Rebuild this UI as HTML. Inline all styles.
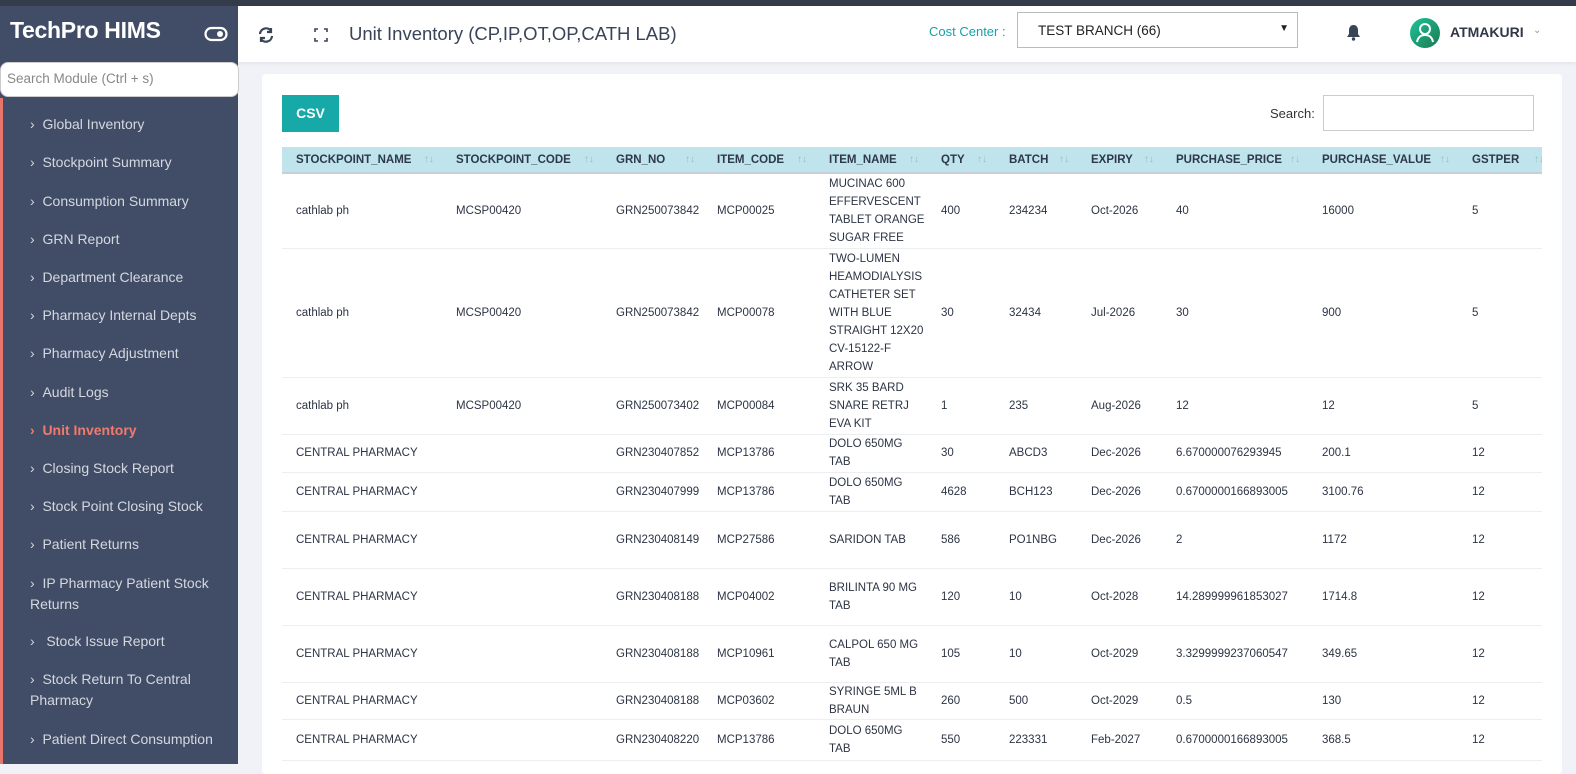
<!DOCTYPE html>
<html><head><meta charset="utf-8"><style>
*{box-sizing:border-box;margin:0;padding:0}
body{width:1576px;height:764px;overflow:hidden;background:#f0f2f7;font-family:"Liberation Sans",sans-serif;position:relative}
.top{position:absolute;left:0;top:0;width:1576px;height:6px;background:#343b4b}
.side{position:absolute;left:0;top:6px;width:238px;height:758px;background:#414d66}
.stripe{position:absolute;left:0;top:98px;width:3px;height:666px;background:#e8756b}
.logo{position:absolute;left:10px;top:17px;color:#fff;font-size:23px;font-weight:bold;letter-spacing:-0.3px}
.srch{position:absolute;left:0;top:62px;width:239px;height:35px;background:#fff;border:1px solid #ccc;border-radius:8px;color:#888;font-size:13.5px;padding:8px 6px}
.item{position:absolute;left:30px;color:#d4d8e0;font-size:14px;line-height:21px;width:200px}
.item.act{color:#f07a6c;font-weight:bold}
.hdr{position:absolute;left:238px;top:6px;width:1338px;height:56px;background:#fff;box-shadow:0 2px 4px rgba(0,0,0,.05)}
.title{position:absolute;left:349px;top:23px;font-size:18.5px;color:#3a4458}
.cc{position:absolute;left:929px;top:24px;font-size:13px;color:#17a2a7}
.sel{position:absolute;left:1017px;top:12px;width:281px;height:36px;border:1px solid #bbb;font-size:13.5px;color:#222;padding:10px 20px}
.card{position:absolute;left:262px;top:74px;width:1300px;height:700px;background:#fff;border-radius:4px}
.csv{position:absolute;left:282px;top:95px;width:57px;height:37px;background:#17a8a8;color:#fff;font-weight:bold;font-size:14px;text-align:center;line-height:37px}
.sl{position:absolute;left:1270px;top:106px;font-size:13px;color:#333}
.si{position:absolute;left:1323px;top:95px;width:211px;height:36px;border:1px solid #ccc}
table{border-collapse:collapse;table-layout:fixed;width:1270px}
th{background:#bfe4ec;height:26px;font-size:11.5px;color:#2f3848;text-align:left;padding-left:14px;border-bottom:2px solid #c7d0d6;white-space:nowrap;overflow:hidden;position:relative}
th span{color:#9bb;font-weight:normal;font-size:10px;position:absolute;right:8px;top:7px}
td{font-size:11.5px;color:#2c3444;padding:0 4px 0 14px;border-bottom:1px solid #eceef2;line-height:18px;vertical-align:middle;white-space:nowrap;overflow:hidden}
.wrap{position:absolute;left:282px;top:147px;width:1260px;height:620px;overflow:hidden}
</style></head><body>
<div class="top"></div>
<div class="side"></div><div class="stripe"></div>
<div class="logo">TechPro HIMS</div>
<svg style="position:absolute;left:204px;top:26px" width="24" height="16" viewBox="0 0 24 16"><rect x="1.5" y="2" width="21" height="12" rx="6" fill="none" stroke="#fff" stroke-width="2.2"/><circle cx="16" cy="8" r="3" fill="#fff"/></svg>
<div class="srch">Search Module (Ctrl + s)</div>
<div class="item" style="top:114px">›&nbsp;&nbsp;Global Inventory</div>
<div class="item" style="top:152px">›&nbsp;&nbsp;Stockpoint Summary</div>
<div class="item" style="top:191px">›&nbsp;&nbsp;Consumption Summary</div>
<div class="item" style="top:229px">›&nbsp;&nbsp;GRN Report</div>
<div class="item" style="top:267px">›&nbsp;&nbsp;Department Clearance</div>
<div class="item" style="top:305px">›&nbsp;&nbsp;Pharmacy Internal Depts</div>
<div class="item" style="top:343px">›&nbsp;&nbsp;Pharmacy Adjustment</div>
<div class="item" style="top:382px">›&nbsp;&nbsp;Audit Logs</div>
<div class="item act" style="top:420px">›&nbsp;&nbsp;Unit Inventory</div>
<div class="item" style="top:458px">›&nbsp;&nbsp;Closing Stock Report</div>
<div class="item" style="top:496px">›&nbsp;&nbsp;Stock Point Closing Stock</div>
<div class="item" style="top:534px">›&nbsp;&nbsp;Patient Returns</div>
<div class="item" style="top:573px">›&nbsp;&nbsp;IP Pharmacy Patient Stock Returns</div>
<div class="item" style="top:631px">›&nbsp;&nbsp;&nbsp;Stock Issue Report</div>
<div class="item" style="top:669px">›&nbsp;&nbsp;Stock Return To Central Pharmacy</div>
<div class="item" style="top:729px">›&nbsp;&nbsp;Patient Direct Consumption</div>
<div class="hdr"></div>
<svg style="position:absolute;left:257px;top:26px" width="18" height="18" viewBox="0 0 18 18" fill="none" stroke="#3a4458" stroke-width="2.2"><path d="M3 8a6 6 0 0 1 11-3"/><path d="M15 10a6 6 0 0 1-11 3"/><path d="M14 2v4h-4" /><path d="M4 16v-4h4"/></svg>
<svg style="position:absolute;left:314px;top:28px" width="14" height="14" viewBox="0 0 14 14" fill="none" stroke="#3a4458" stroke-width="1.6"><path d="M1 4V1h3M10 1h3v3M13 10v3h-3M4 13H1v-3"/></svg>
<div class="title">Unit Inventory (CP,IP,OT,OP,CATH LAB)</div>
<div class="cc">Cost Center :</div>
<div class="sel">TEST BRANCH (66)<span style="position:absolute;right:8px;top:10px;font-size:10px">▼</span></div>
<svg style="position:absolute;left:1346px;top:24px" width="15" height="17" viewBox="0 0 15 17"><path d="M7.5 1c-3 0-4.5 2.5-4.5 5v4L1 13h13l-2-3V6c0-2.5-1.5-5-4.5-5z" fill="#3a4458"/><circle cx="7.5" cy="15" r="1.7" fill="#3a4458"/></svg>
<svg style="position:absolute;left:1410px;top:18px" width="30" height="30" viewBox="0 0 30 30"><defs><linearGradient id="g" x1="0" y1="0" x2="1" y2="1"><stop offset="0" stop-color="#1fc39a"/><stop offset="1" stop-color="#1a7a4f"/></linearGradient></defs><circle cx="15" cy="15" r="15" fill="url(#g)"/><circle cx="15" cy="11" r="5" fill="none" stroke="#fff" stroke-width="2"/><path d="M7 24c1-5 4-7 8-7s7 2 8 7" fill="none" stroke="#fff" stroke-width="2"/></svg>
<div style="position:absolute;left:1450px;top:24px;font-size:14px;font-weight:bold;color:#2f3848">ATMAKURI</div>
<div style="position:absolute;left:1533px;top:25px;font-size:10px;color:#999">⌄</div>
<div class="card"></div>
<div class="csv">CSV</div>
<div class="sl">Search:</div><div class="si"></div>
<div class="wrap"><table>
<colgroup><col style="width:160px"><col style="width:160px"><col style="width:101px"><col style="width:112px"><col style="width:112px"><col style="width:68px"><col style="width:82px"><col style="width:85px"><col style="width:146px"><col style="width:150px"><col style="width:94px"></colgroup>
<tr><th>STOCKPOINT_NAME<span>↑↓</span></th><th>STOCKPOINT_CODE<span>↑↓</span></th><th>GRN_NO<span>↑↓</span></th><th>ITEM_CODE<span>↑↓</span></th><th>ITEM_NAME<span>↑↓</span></th><th>QTY<span>↑↓</span></th><th>BATCH<span>↑↓</span></th><th>EXPIRY<span>↑↓</span></th><th>PURCHASE_PRICE<span>↑↓</span></th><th>PURCHASE_VALUE<span>↑↓</span></th><th>GSTPER<span>↑↓</span></th></tr>
<tr style="height:75px"><td>cathlab ph</td><td>MCSP00420</td><td>GRN250073842</td><td>MCP00025</td><td>MUCINAC 600<br>EFFERVESCENT<br>TABLET ORANGE<br>SUGAR FREE</td><td>400</td><td>234234</td><td>Oct-2026</td><td>40</td><td>16000</td><td>5</td></tr>
<tr style="height:129px"><td>cathlab ph</td><td>MCSP00420</td><td>GRN250073842</td><td>MCP00078</td><td>TWO-LUMEN<br>HEAMODIALYSIS<br>CATHETER SET<br>WITH BLUE<br>STRAIGHT 12X20<br>CV-15122-F<br>ARROW</td><td>30</td><td>32434</td><td>Jul-2026</td><td>30</td><td>900</td><td>5</td></tr>
<tr style="height:57px"><td>cathlab ph</td><td>MCSP00420</td><td>GRN250073402</td><td>MCP00084</td><td>SRK 35 BARD<br>SNARE RETRJ<br>EVA KIT</td><td>1</td><td>235</td><td>Aug-2026</td><td>12</td><td>12</td><td>5</td></tr>
<tr style="height:38px"><td>CENTRAL PHARMACY</td><td></td><td>GRN230407852</td><td>MCP13786</td><td>DOLO 650MG<br>TAB</td><td>30</td><td>ABCD3</td><td>Dec-2026</td><td>6.670000076293945</td><td>200.1</td><td>12</td></tr>
<tr style="height:39px"><td>CENTRAL PHARMACY</td><td></td><td>GRN230407999</td><td>MCP13786</td><td>DOLO 650MG<br>TAB</td><td>4628</td><td>BCH123</td><td>Dec-2026</td><td>0.6700000166893005</td><td>3100.76</td><td>12</td></tr>
<tr style="height:57px"><td>CENTRAL PHARMACY</td><td></td><td>GRN230408149</td><td>MCP27586</td><td>SARIDON TAB</td><td>586</td><td>PO1NBG</td><td>Dec-2026</td><td>2</td><td>1172</td><td>12</td></tr>
<tr style="height:57px"><td>CENTRAL PHARMACY</td><td></td><td>GRN230408188</td><td>MCP04002</td><td>BRILINTA 90 MG<br>TAB</td><td>120</td><td>10</td><td>Oct-2028</td><td>14.289999961853027</td><td>1714.8</td><td>12</td></tr>
<tr style="height:57px"><td>CENTRAL PHARMACY</td><td></td><td>GRN230408188</td><td>MCP10961</td><td>CALPOL 650 MG<br>TAB</td><td>105</td><td>10</td><td>Oct-2029</td><td>3.3299999237060547</td><td>349.65</td><td>12</td></tr>
<tr style="height:37px"><td>CENTRAL PHARMACY</td><td></td><td>GRN230408188</td><td>MCP03602</td><td>SYRINGE 5ML B<br>BRAUN</td><td>260</td><td>500</td><td>Oct-2029</td><td>0.5</td><td>130</td><td>12</td></tr>
<tr style="height:41px"><td>CENTRAL PHARMACY</td><td></td><td>GRN230408220</td><td>MCP13786</td><td>DOLO 650MG<br>TAB</td><td>550</td><td>223331</td><td>Feb-2027</td><td>0.6700000166893005</td><td>368.5</td><td>12</td></tr>
</table></div>
</body></html>
